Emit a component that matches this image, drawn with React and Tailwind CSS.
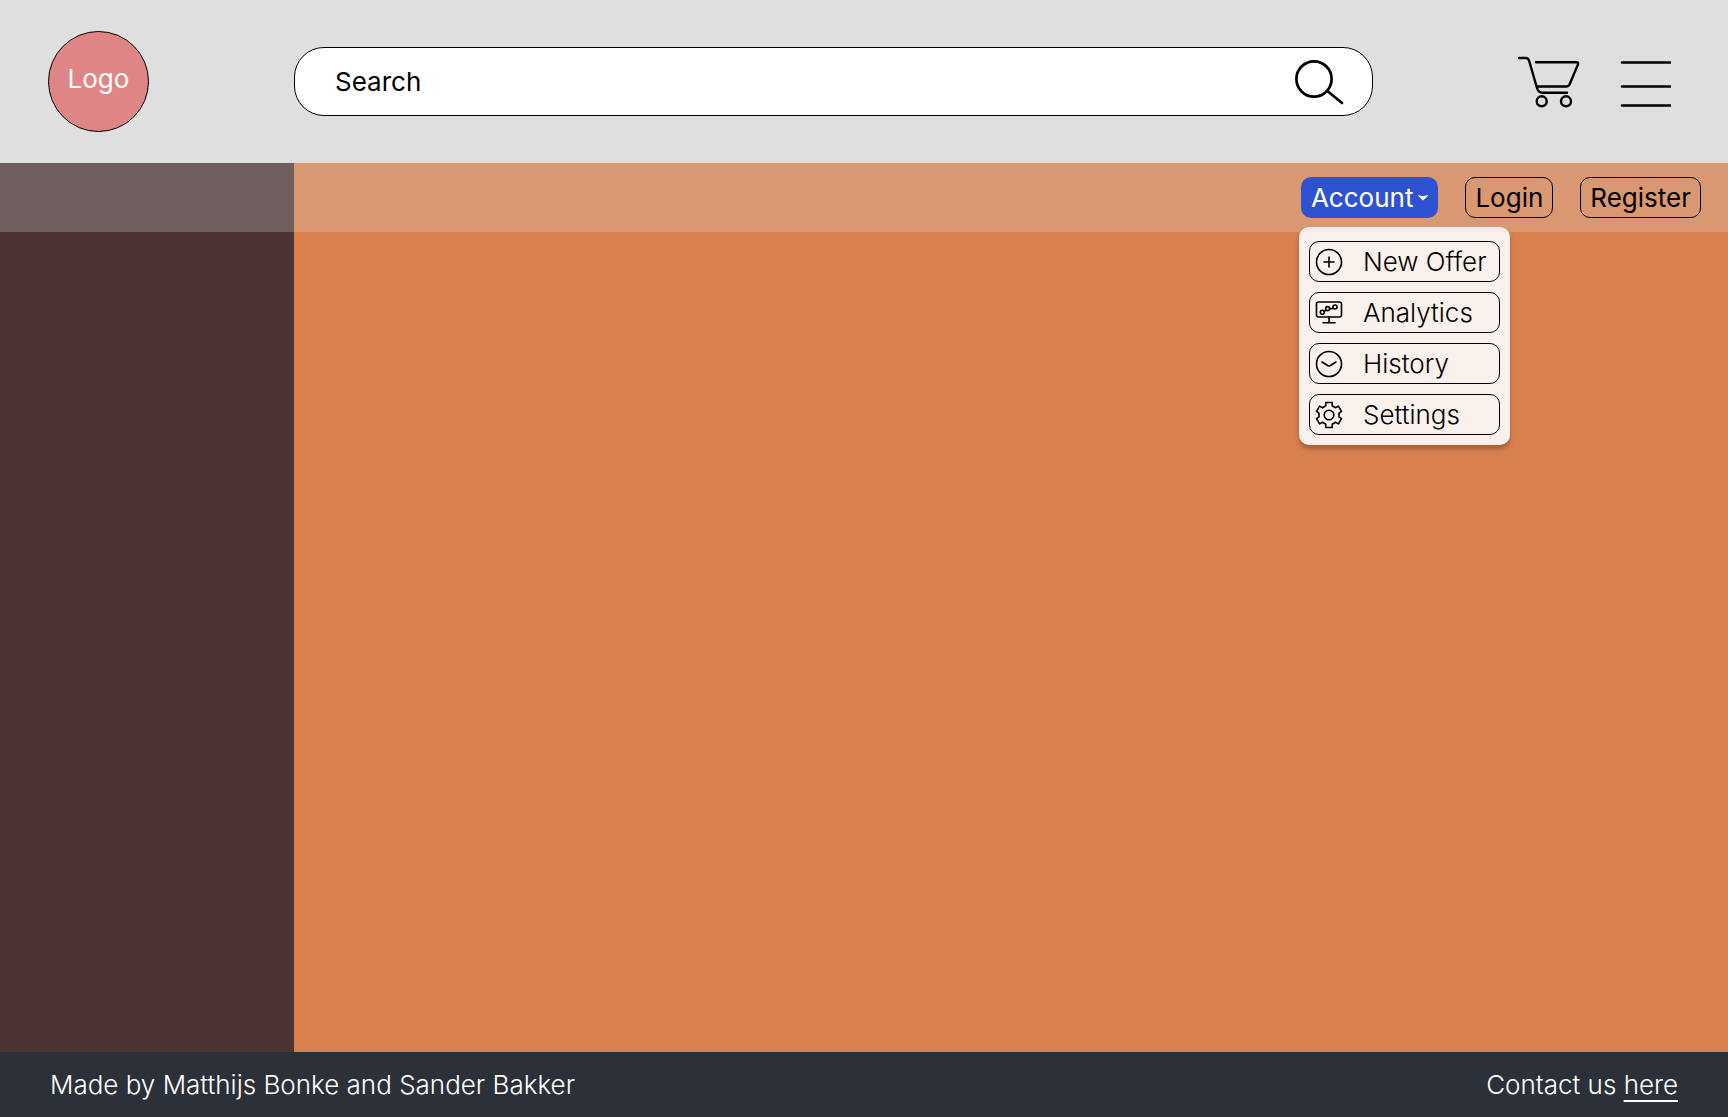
import React from "react";

const stroke = {
  fill: "none",
  stroke: "currentColor",
  strokeLinecap: "round",
  strokeLinejoin: "round",
};

function SearchIcon() {
  return (
    <svg width="50" height="46" viewBox="0 0 50 46" strokeWidth="2.7" {...stroke}>
      <circle cx="20" cy="20" r="17.6" />
      <path d="M34 32.5 48 44" />
    </svg>
  );
}

function CartIcon() {
  return (
    <svg width="64" height="54" viewBox="0 1 64 54" strokeWidth="2.4" {...stroke}>
      <path d="M3 4h7c2 0 2.600 1 3.200 3L21 34C22 37.500 23.500 38.700 26.500 38.700H51" />
      <path d="M20 8.200h40.500c1.500 0 2 .9 1.400 2.400L53.500 30.500c-.7 1.500-1.500 2-3 2H22" />
      <circle cx="25.700" cy="47.300" r="5" />
      <circle cx="50" cy="47.300" r="5" />
    </svg>
  );
}

function MenuIcon() {
  return (
    <svg width="51" height="52" viewBox="0 -4 51 52" strokeWidth="2.6" {...stroke}>
      <path d="M2 2.500h48M2 26.500h48M2 45.500h48" />
    </svg>
  );
}

function PlusIcon() {
  return (
    <svg width="28" height="28" viewBox="0 0 28 28" strokeWidth="1.6" {...stroke}>
      <circle cx="14" cy="14" r="12.500" />
      <path d="M14 9v10M9 14h10" />
    </svg>
  );
}

function AnalyticsIcon() {
  return (
    <svg width="28" height="28" viewBox="0 0 28 28" strokeWidth="1.6" {...stroke}>
      <rect x="1.500" y="3" width="25" height="15" rx="2" />
      <path d="M14 18V23.500M8 23.700h12M9 12.500l2-1.500M14.500 10l3.500-.6" />
      <circle cx="7.300" cy="13.200" r="2" />
      <circle cx="12.700" cy="9.600" r="2" />
      <circle cx="20" cy="8" r="2" />
    </svg>
  );
}

function HistoryIcon() {
  return (
    <svg width="28" height="28" viewBox="0 0 28 28" strokeWidth="1.6" {...stroke}>
      <circle cx="14" cy="14" r="12.500" />
      <path d="M7 12l6 3.700q1 .6 2 0L21 12" />
    </svg>
  );
}

function SettingsIcon() {
  return (
    <svg width="28" height="28" viewBox="0 0 28 28" strokeWidth="1.6" {...stroke}>
      <path d="M10.800 1.500h6.400v3.300l3.300 1.900 2.900-1.600 3.100 5.300-2.500 1.700v3.800l2.500 1.700-3.100 5.300-2.900-1.600-3.300 1.900v3.300h-6.400v-3.300l-3.300-1.900-2.900 1.600-3.100-5.300L4 15.900v-3.800l-2.500-1.700 3.100-5.300 2.900 1.600 3.300-1.900z" />
      <circle cx="14" cy="14" r="4.800" />
    </svg>
  );
}

const menuItems = [
  { label: "New Offer", Icon: PlusIcon },
  { label: "Analytics", Icon: AnalyticsIcon },
  { label: "History", Icon: HistoryIcon },
  { label: "Settings", Icon: SettingsIcon },
];

export default function App() {
  return (
    <div className="flex min-h-screen flex-col font-['Inter',sans-serif] text-[26px] leading-8 text-black">
      <header className="flex items-center bg-[#dfdfdf] py-[31px] pr-[57px] pl-12">
        <div className="w-[246px] shrink-0">
          <a
            href="#"
            className="flex size-[101px] items-center justify-center rounded-full border border-black bg-[#e08585] pb-[5px] text-white"
          >
            Logo
          </a>
        </div>
        <form className="flex h-[69px] min-w-0 flex-1 items-center rounded-[30px] border border-black bg-white pr-7 pl-10">
          <input
            type="text"
            aria-label="Search"
            placeholder="Search"
            className="min-w-0 flex-1 bg-transparent outline-none placeholder:text-black placeholder:opacity-100"
          />
          <button type="button" aria-label="Submit search">
            <SearchIcon />
          </button>
        </form>
        <div className="ml-[143px] flex shrink-0 items-center gap-10">
          <button type="button" aria-label="Cart">
            <CartIcon />
          </button>
          <button type="button" aria-label="Menu">
            <MenuIcon />
          </button>
        </div>
      </header>

      <main className="grid flex-1 grid-cols-[294px_1fr]">
        <aside className="col-start-1 row-start-1 bg-[#4c3434]" />
        <section className="col-start-2 row-start-1 bg-[#d8814e]" />

        <ul className="z-10 col-start-2 row-start-1 mt-16 mr-[218px] flex w-[211px] flex-col gap-[10px] self-start justify-self-end rounded-[10px] bg-[#fbf1ec] px-[10px] pt-[14px] pb-[10px] font-light shadow-[0_4px_4px_rgba(0,0,0,0.25)]">
          {menuItems.map(({ label, Icon }) => (
            <li key={label}>
              <button
                type="button"
                className="flex h-[41px] w-full items-center gap-5 rounded-[10px] border border-black pl-[5px] whitespace-nowrap"
              >
                <Icon />
                {label}
              </button>
            </li>
          ))}
        </ul>

        <nav className="z-20 col-span-2 col-start-1 row-start-1 flex h-[69px] items-center justify-end gap-[27px] self-start bg-[#dfdfdf]/25 pr-[27px]">
          <button
            type="button"
            aria-expanded="true"
            className="flex h-[41px] items-center gap-[5px] rounded-[10px] bg-[#2f52d0] px-[10px] text-white"
          >
            Account
            <svg width="10" height="6" viewBox="0 0 10 6" fill="currentColor">
              <path d="M.3 0Q5 2 9.700 0q.6.300 0 1L5.700 5q-.7.600-1.400 0L.3 1Q-.3.300.3 0z" />
            </svg>
          </button>
          <button type="button" className="h-[41px] rounded-[10px] border border-black px-[9px]">
            Login
          </button>
          <button type="button" className="h-[41px] rounded-[10px] border border-black px-[9px]">
            Register
          </button>
        </nav>
      </main>

      <footer className="flex h-[65px] items-center justify-between bg-[#2c3038] px-[50px] font-light text-white">
        <p>Made by Matthijs Bonke and Sander Bakker</p>
        <p>
          Contact us{" "}
          <a href="#" className="underline decoration-2 underline-offset-[6px]">
            here
          </a>
        </p>
      </footer>
    </div>
  );
}
